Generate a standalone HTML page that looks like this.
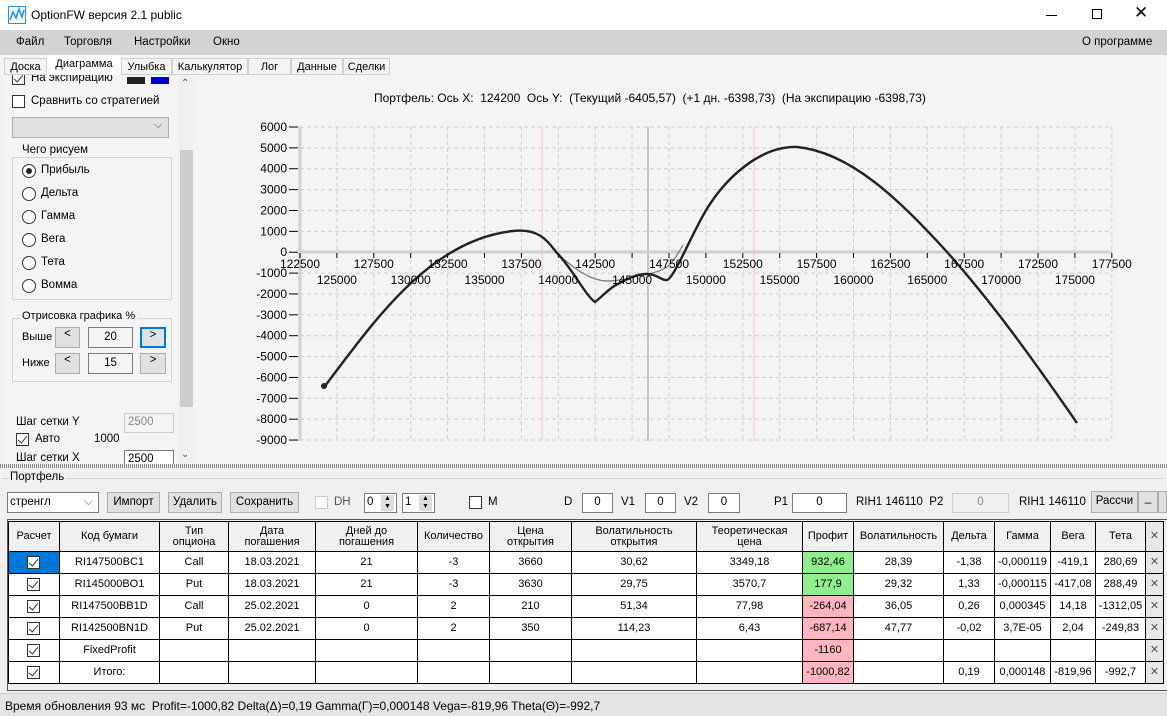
<!DOCTYPE html>
<html><head><meta charset="utf-8"><style>
*{box-sizing:border-box;margin:0;padding:0}
body{width:1167px;height:716px;overflow:hidden;background:#f0f0f0;font-family:"Liberation Sans",sans-serif;font-size:11.5px;color:#000;position:relative}
.a{position:absolute;white-space:nowrap}
.btn{position:absolute;background:#e1e1e1;border:1px solid #adadad;text-align:center}
.tb{position:absolute;background:#fff;border:1px solid #7a7a7a;text-align:center}
.cb{position:absolute;width:13px;height:13px;border:1px solid #333;background:#fff}
.cb.on::after{content:"";position:absolute;left:3px;top:0px;width:4px;height:8px;border:solid #333;border-width:0 1.5px 1.5px 0;transform:rotate(40deg)}
.rb{position:absolute;width:14px;height:14px;border:1px solid #333;border-radius:50%;background:#fff}
.rb.on::after{content:"";position:absolute;left:3px;top:3px;width:6px;height:6px;border-radius:50%;background:#222}
.tab{position:absolute;top:58px;height:17px;border:1px solid #d0d0d0;padding-top:2px;text-align:center;overflow:hidden;font-size:11px}
table{border-collapse:collapse;position:absolute;left:8px;top:521px;font-size:11px;table-layout:fixed}
td{border:1px solid #000;text-align:center;height:22px;padding:0;background:#fff;overflow:hidden;white-space:nowrap;line-height:11px}
tr.h td{background:#f0f0f0;height:30px;font-size:11px}
.g{background:#90ee90!important}.r{background:#ffb6c1!important}
.x{background:#e8e8e8!important;color:#555}
</style></head><body>
<div class="a" style="left:0;top:0;width:1167px;height:30px;background:#fff"></div>
<svg class="a" style="left:8px;top:6px" width="18" height="18" viewBox="0 0 18 18"><rect x="0.5" y="0.5" width="17" height="17" fill="#fff" stroke="#1e90ff"/><path d="M2 14 L5 6 L8 12 L11 3 L14 11 L16 4" fill="none" stroke="#1e90ff" stroke-width="1.6"/></svg>
<div class="a" style="left:31px;top:8px;font-size:12px">OptionFW версия 2.1 public</div>
<div class="a" style="left:1046px;top:15px;width:11px;height:1px;background:#000"></div>
<div class="a" style="left:1092px;top:9px;width:10px;height:10px;border:1px solid #000"></div>
<div class="a" style="left:1134px;top:3px;font-size:17px">✕</div>
<div class="a" style="left:0;top:30px;width:1167px;height:25px;background:#d3d3d3"></div>
<div class="a" style="left:16px;top:36px">Файл</div><div class="a" style="left:64px;top:36px">Торговля</div><div class="a" style="left:134px;top:36px">Настройки</div><div class="a" style="left:213px;top:36px">Окно</div><div class="a" style="left:1082px;top:36px">О программе</div>
<div class="a" style="left:0;top:55px;width:1167px;height:20px;background:#f4f4f4"></div>
<div class="tab" style="left:4px;width:43px">Доска</div>
<div class="a" style="left:47px;top:55px;width:74px;height:21px;background:#fff;padding-top:3px;text-align:center;font-size:11px">Диаграмма</div>
<div class="tab" style="left:121px;width:51px">Улыбка</div>
<div class="tab" style="left:172px;width:76px">Калькулятор</div>
<div class="tab" style="left:248px;width:43px">Лог</div>
<div class="tab" style="left:291px;width:52px">Данные</div>
<div class="tab" style="left:343px;width:47px">Сделки</div>
<div class="a" style="left:3px;top:75px;width:175px;height:389px;background:#f4f4f4;overflow:hidden">
<div class="cb on" style="left:9px;top:-3px"></div><div class="a" style="left:28px;top:-3px">На экспирацию</div>
<div class="a" style="left:124px;top:2px;width:18px;height:7px;background:#222"></div>
<div class="a" style="left:148px;top:2px;width:18px;height:7px;background:#0000cd"></div>
<div class="cb" style="left:9px;top:20px"></div><div class="a" style="left:28px;top:20px">Сравнить со стратегией</div>
<div class="a" style="left:9px;top:42px;width:157px;height:21px;background:#e1e1e1;border:1px solid #adadad"></div>
<div class="a" style="left:151px;top:44px;color:#555;font-size:11px">⌵</div>
<div class="a" style="left:9px;top:82px;width:160px;height:143px;border:1px solid #d5d5d5"></div>
<div class="a" style="left:17px;top:69px;background:#f4f4f4;padding:0 2px">Чего рисуем</div>
<div class="rb on" style="left:19px;top:89px"></div><div class="a" style="left:38px;top:89px">Прибыль</div>
<div class="rb" style="left:19px;top:112px"></div><div class="a" style="left:38px;top:112px">Дельта</div>
<div class="rb" style="left:19px;top:135px"></div><div class="a" style="left:38px;top:135px">Гамма</div>
<div class="rb" style="left:19px;top:158px"></div><div class="a" style="left:38px;top:158px">Вега</div>
<div class="rb" style="left:19px;top:181px"></div><div class="a" style="left:38px;top:181px">Тета</div>
<div class="rb" style="left:19px;top:204px"></div><div class="a" style="left:38px;top:204px">Вомма</div>
<div class="a" style="left:9px;top:243px;width:160px;height:64px;border:1px solid #d5d5d5"></div>
<div class="a" style="left:17px;top:235px;background:#f4f4f4;padding:0 2px;font-size:11px">Отрисовка графика %</div>
<div class="a" style="left:19px;top:256px;font-size:11px">Выше</div>
<div class="btn" style="left:52px;top:252px;width:25px;height:21px">&lt;</div>
<div class="tb" style="left:85px;top:252px;width:45px;height:21px;background:#f4f4f4;padding-top:3px">20</div>
<div class="btn" style="left:137px;top:252px;width:26px;height:21px;border:2px solid #0078d7">&gt;</div>
<div class="a" style="left:19px;top:282px;font-size:11px">Ниже</div>
<div class="btn" style="left:52px;top:278px;width:25px;height:21px">&lt;</div>
<div class="tb" style="left:85px;top:278px;width:45px;height:21px;background:#f4f4f4;padding-top:3px">15</div>
<div class="btn" style="left:137px;top:278px;width:26px;height:21px">&gt;</div>
<div class="a" style="left:13px;top:341px">Шаг сетки Y</div>
<div class="a" style="left:121px;top:338px;width:50px;height:20px;border:1px solid #ccc;color:#888;padding:2px 3px">2500</div>
<div class="cb on" style="left:13px;top:358px"></div><div class="a" style="left:32px;top:358px">Авто</div><div class="a" style="left:91px;top:358px">1000</div>
<div class="a" style="left:13px;top:377px">Шаг сетки X</div>
<div class="a" style="left:121px;top:375px;width:50px;height:20px;border:1px solid #7a7a7a;background:#fff;padding:2px 3px">2500</div>
</div>
<div class="a" style="left:178px;top:75px;width:15px;height:389px;background:#f0f0f0"></div>
<div class="a" style="left:180px;top:150px;width:13px;height:257px;background:#cdcdcd"></div>
<div class="a" style="left:181px;top:78px;font-size:10px;color:#555">⌃</div>
<div class="a" style="left:181px;top:449px;font-size:10px;color:#555">⌄</div>
<div class="a" style="left:193px;top:75px;width:974px;height:389px;background:#f4f4f4"></div>
<div class="a" style="left:374px;top:91px;font-size:12px">Портфель: Ось X: &nbsp;124200 &nbsp;Ось Y: &nbsp;(Текущий -6405,57) &nbsp;(+1 дн. -6398,73) &nbsp;(На экспирацию -6398,73)</div>
<svg class="a" style="left:0;top:0" width="1167" height="464" font-family="Liberation Sans" font-size="12">
<g stroke="#cfcfcf" stroke-dasharray="4,3" stroke-width="1" id="grid"></g>
<g id="yl"></g>
<line x1="542" y1="127" x2="542" y2="441" stroke="#ffc0cb"/>
<line x1="754" y1="127" x2="754" y2="441" stroke="#ffc0cb"/>
<line x1="648" y1="127" x2="648" y2="441" stroke="#8899aa"/>
<line x1="300" y1="252" x2="1112" y2="252" stroke="#d0d0d0" stroke-width="3"/>
<line x1="300" y1="127" x2="300" y2="441" stroke="#d0d0d0" stroke-width="3"/>
<path d="M557,253 C575,270 592,281 607,281 C625,281 638,275 647,274 C655,273 662,270 667,267 C673,262 678,254 683,245" fill="none" stroke="#777" stroke-width="1.2"/>
<path d="M325,386 C375,320 430,240 513,231 C540,228 548,242 557,253 C572,268 585,295 595,302 C602,297 610,287 620,283 C630,277 640,274 647,274 C657,274 662,281 667,280 C674,278 690,238 705,212 C725,178 760,146 797,147 C850,152 900,200 947,252 C990,300 1030,355 1077,423" fill="none" stroke="#222" stroke-width="2.4"/>
<circle cx="324" cy="386" r="3" fill="#222"/>
<g id="xl"></g>
</svg>
<script>
(function(){var g=document.getElementById('grid'),s='';
for(var i=0;i<=22;i++){var x=300+i*36.9;s+='<line x1="'+x+'" y1="127" x2="'+x+'" y2="441"/>';}
for(var j=0;j<=15;j++){var y=127+j*20.87;s+='<line x1="300" y1="'+y+'" x2="1112" y2="'+y+'"/>';}
g.innerHTML=s;var t='';
for(var j=0;j<=15;j++){var y=127+j*20.87;var v=6000-j*1000;t+='<text x="287" y="'+(y+4)+'" text-anchor="end">'+v+'</text><line x1="289" y1="'+y+'" x2="298" y2="'+y+'" stroke="#000"/>';}
document.getElementById('yl').innerHTML=t;var u='';
for(var i=0;i<=22;i++){var x=300+i*36.9;var v=122500+i*2500;u+='<line x1="'+x+'" y1="253" x2="'+x+'" y2="258" stroke="#000"/>';
u+='<text x="'+x+'" y="'+(i%2==0?268:284)+'" text-anchor="middle">'+v+'</text>';}
document.getElementById('xl').innerHTML=u;})();
</script>
<div class="a" style="left:0;top:464px;width:1167px;height:4px;background:repeating-linear-gradient(90deg,#888 0 1px,#f0f0f0 1px 2px)"></div>
<div class="a" style="left:2px;top:478px;width:1163px;height:1px;background:#d5d5d5"></div>
<div class="a" style="left:8px;top:471px;background:#f0f0f0;padding:0 2px">Портфель</div>
<div class="a" style="left:7px;top:492px;width:92px;height:21px;background:#fff;border:1px solid #7a7a7a;padding:3px 2px">стренгл<span style="position:absolute;left:76px;color:#777">⌵</span></div>
<div class="btn" style="left:107px;top:492px;width:53px;height:21px;padding-top:3px">Импорт</div>
<div class="btn" style="left:168px;top:492px;width:54px;height:21px;padding-top:3px">Удалить</div>
<div class="btn" style="left:230px;top:492px;width:69px;height:21px;padding-top:3px">Сохранить</div>
<div class="cb" style="left:315px;top:496px;border-color:#ccc"></div><div class="a" style="left:334px;top:496px;color:#555">DH</div>
<div class="tb" style="left:364px;top:493px;width:33px;height:20px;text-align:left;padding:2px">0</div><div class="a" style="left:381px;top:495px;width:13px;height:16px;background:#ddd;font-size:7px;line-height:8px;text-align:center">▲<br>▼</div>
<div class="tb" style="left:402px;top:493px;width:33px;height:20px;text-align:left;padding:2px">1</div><div class="a" style="left:419px;top:495px;width:13px;height:16px;background:#ddd;font-size:7px;line-height:8px;text-align:center">▲<br>▼</div>
<div class="cb" style="left:469px;top:496px"></div><div class="a" style="left:488px;top:496px">M</div>
<div class="a" style="left:564px;top:496px">D</div><div class="tb" style="left:582px;top:493px;width:31px;height:20px;padding-top:2px">0</div>
<div class="a" style="left:621px;top:496px">V1</div><div class="tb" style="left:645px;top:493px;width:31px;height:20px;padding-top:2px">0</div>
<div class="a" style="left:684px;top:496px">V2</div><div class="tb" style="left:708px;top:493px;width:32px;height:20px;padding-top:2px">0</div>
<div class="a" style="left:774px;top:496px">P1</div><div class="tb" style="left:792px;top:493px;width:55px;height:20px;padding-top:2px">0</div>
<div class="a" style="left:856px;top:496px">RIH1 146110 &nbsp;P2</div>
<div class="a" style="left:952px;top:493px;width:57px;height:20px;border:1px solid #ccc;color:#888;text-align:center;padding-top:2px">0</div>
<div class="a" style="left:1019px;top:496px">RIH1 146110</div>
<div class="btn" style="left:1091px;top:491px;width:47px;height:22px;padding-top:3px">Рассчи</div>
<div class="btn" style="left:1138px;top:491px;width:20px;height:22px">_</div>
<div class="btn" style="left:1158px;top:491px;width:9px;height:22px"></div>
<div class="a" style="left:7px;top:519px;width:1160px;height:172px;border:1px solid #555;border-right:none;background:#f0f0f0"></div>
<table>
<colgroup><col style="width:51px"><col style="width:100px"><col style="width:69px"><col style="width:87px"><col style="width:102px"><col style="width:72px"><col style="width:82px"><col style="width:125px"><col style="width:106px"><col style="width:51px"><col style="width:90px"><col style="width:51px"><col style="width:56px"><col style="width:45px"><col style="width:50px"><col style="width:18px"></colgroup>
<tr class="h"><td>Расчет</td><td>Код бумаги</td><td>Тип<br>опциона</td><td>Дата<br>погашения</td><td>Дней до<br>погашения</td><td>Количество</td><td>Цена<br>открытия</td><td>Волатильность<br>открытия</td><td>Теоретическая<br>цена</td><td>Профит</td><td>Волатильность</td><td>Дельта</td><td>Гамма</td><td>Вега</td><td>Тета</td><td class="x">✕</td></tr>
<tr><td style="background:#0078d7;position:relative"><div class="cb on" style="left:18px;top:4px"></div></td><td>RI147500BC1</td><td>Call</td><td>18.03.2021</td><td>21</td><td>-3</td><td>3660</td><td>30,62</td><td>3349,18</td><td class="g">932,46</td><td>28,39</td><td>-1,38</td><td>-0,000119</td><td>-419,1</td><td>280,69</td><td class="x">✕</td></tr>
<tr><td style="position:relative"><div class="cb on" style="left:18px;top:4px"></div></td><td>RI145000BO1</td><td>Put</td><td>18.03.2021</td><td>21</td><td>-3</td><td>3630</td><td>29,75</td><td>3570,7</td><td class="g">177,9</td><td>29,32</td><td>1,33</td><td>-0,000115</td><td>-417,08</td><td>288,49</td><td class="x">✕</td></tr>
<tr><td style="position:relative"><div class="cb on" style="left:18px;top:4px"></div></td><td>RI147500BB1D</td><td>Call</td><td>25.02.2021</td><td>0</td><td>2</td><td>210</td><td>51,34</td><td>77,98</td><td class="r">-264,04</td><td>36,05</td><td>0,26</td><td>0,000345</td><td>14,18</td><td>-1312,05</td><td class="x">✕</td></tr>
<tr><td style="position:relative"><div class="cb on" style="left:18px;top:4px"></div></td><td>RI142500BN1D</td><td>Put</td><td>25.02.2021</td><td>0</td><td>2</td><td>350</td><td>114,23</td><td>6,43</td><td class="r">-687,14</td><td>47,77</td><td>-0,02</td><td>3,7E-05</td><td>2,04</td><td>-249,83</td><td class="x">✕</td></tr>
<tr><td style="position:relative"><div class="cb on" style="left:18px;top:4px"></div></td><td>FixedProfit</td><td></td><td></td><td></td><td></td><td></td><td></td><td></td><td class="r">-1160</td><td></td><td></td><td></td><td></td><td></td><td class="x">✕</td></tr>
<tr><td style="position:relative"><div class="cb on" style="left:18px;top:4px"></div></td><td>Итого:</td><td></td><td></td><td></td><td></td><td></td><td></td><td></td><td class="r">-1000,82</td><td></td><td>0,19</td><td>0,000148</td><td>-819,96</td><td>-992,7</td><td class="x">✕</td></tr>
</table>
<div class="a" style="left:0;top:693px;width:1167px;height:23px;background:#e4e4e4;border-top:1px solid #ccc"></div>
<div class="a" style="left:5px;top:699px;font-size:12px">Время обновления 93 мс &nbsp;Profit=-1000,82 Delta(Δ)=0,19 Gamma(Γ)=0,000148 Vega=-819,96 Theta(Θ)=-992,7</div>
</body></html>
